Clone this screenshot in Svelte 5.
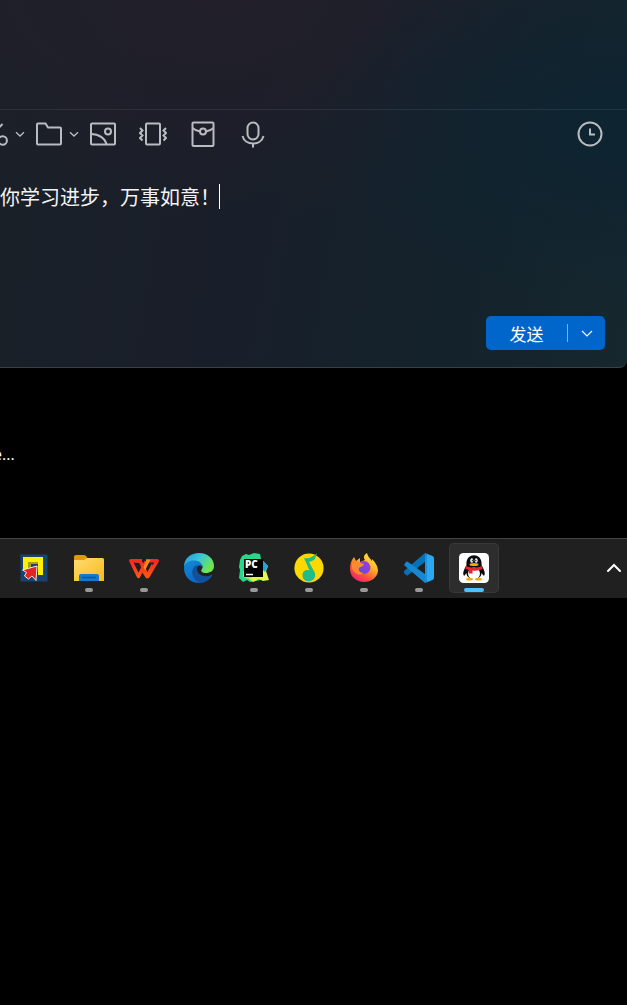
<script>
  let message = $state('你学习进步，万事如意！');
</script>

{#snippet chevron()}
  <svg class="chev" viewBox="0 0 12 12" aria-hidden="true"><path d="M2 4.200 6 8 10 4.200" /></svg>
{/snippet}

<div class="screen">
  <main class="chat">
    <section class="history" aria-label="聊天记录"></section>
    <section class="composer">
      <div class="toolbar">
        <div class="group">
          <button class="tool" aria-label="截图">
            <svg viewBox="0 0 28 28"><path d="M8 18 21.500 4M2 4l15 14" /><circle cx="4.500" cy="21" r="4.200" /><circle cx="21.700" cy="20.500" r="4.200" /></svg>
          </button>
          <button class="more" aria-label="截图选项">{@render chevron()}</button>
        </div>
        <div class="group">
          <button class="tool" aria-label="文件">
            <svg viewBox="0 0 28 28"><path d="M2 4.500Q2 3.500 3 3.500H10.500L13 7.500H25Q26 7.500 26 8.500V23.500Q26 24.500 25 24.500H3Q2 24.500 2 23.500Z" /></svg>
          </button>
          <button class="more" aria-label="文件选项">{@render chevron()}</button>
        </div>
        <div class="tools">
          <button class="tool" aria-label="图片">
            <svg viewBox="0 0 28 28"><rect x="2" y="3.500" width="24" height="21" rx="1" /><circle cx="19" cy="11.500" r="3" /><path d="M2 14C10 14 16 18 17.500 24.500" /></svg>
          </button>
          <button class="tool" aria-label="窗口抖动">
            <svg viewBox="0 0 28 28"><rect x="7" y="3.500" width="14" height="21" rx="1" /><path d="M1 8 3.500 10.500 1 13 3.500 15.500 1 18 3.500 20.500M27 8 24.500 10.500 27 13 24.500 15.500 27 18 24.500 20.500" /></svg>
          </button>
          <button class="tool" aria-label="红包">
            <svg viewBox="0 0 28 28"><rect x="3.500" y="2.500" width="21" height="23.500" rx="1" /><path d="M3.500 8Q7 11 11 11.500M24.500 8Q21 11 17 11.500" /><circle cx="14" cy="11.500" r="3" /></svg>
          </button>
          <button class="tool" aria-label="语音">
            <svg viewBox="0 0 28 28"><rect x="8.500" y="2.500" width="11" height="17" rx="5.500" /><path d="M3.500 16C6 26 22 26 24.500 16M14 23.500v4" /></svg>
          </button>
        </div>
        <button class="tool history-button" aria-label="消息记录">
          <svg viewBox="0 0 28 28"><circle cx="14" cy="14" r="11.500" /><path d="M14 8.500v6h5" /></svg>
        </button>
      </div>
      <div class="editor">
        <textarea aria-label="消息" rows="1" spellcheck="false" bind:value={message}></textarea>
        <span class="caret"></span>
      </div>
      <div class="actions">
        <div class="send">
          <button class="send-main">发送</button>
          <button class="send-more" aria-label="发送选项"><svg viewBox="0 0 14 14"><path d="M2 5 7 10 12 5" /></svg></button>
        </div>
      </div>
    </section>
  </main>

  <div class="desktop"><span class="label">e...</span></div>

  <nav class="taskbar" aria-label="任务栏">
    <div class="apps">
      <button class="app" aria-label="截图工具">
        <svg viewBox="0 0 30 30">
          <rect x="1.500" y="1.500" width="27" height="27" fill="#19436f" />
          <path d="M4 4h20v18h-5V9H9v9H4Z" fill="#fff000" /><path d="M9 9h10v2h-7v5H9Z" fill="#a5a11c" />
          <path d="m18 13-14.500 4 4 2.500-2 3.500 4 3 3.500-3 4 4.500Z" fill="#e32224" stroke="#f2e8e8" stroke-width="1" />
        </svg>
      </button>
      <button class="app" aria-label="文件资源管理器">
        <svg viewBox="0 0 30 30">
          <defs><linearGradient id="folder" x2="1" y2="1"><stop stop-color="#ffdc70" /><stop offset="1" stop-color="#f9b91e" /></linearGradient></defs>
          <path d="M0 4Q0 2 2 2h8q2 0 3.500 3H28q2 0 2 2v10H0Z" fill="#df9909" />
          <path d="M0 7h10l3-2h15q2 0 2 2v21H0Z" fill="url(#folder)" />
          <path d="M5 28v-5q0-2 2-2h16q2 0 2 2v5Z" fill="#1479d2" /><path d="M8 24.500h14" stroke="#07559c" stroke-width="1.500" />
        </svg>
        <span class="dot"></span>
      </button>
      <button class="app" aria-label="WPS Office">
        <svg viewBox="0 0 30 30">
          <defs><linearGradient id="wps" x2="0" y2="1"><stop stop-color="#fb2822" /><stop offset="1" stop-color="#ff5411" /></linearGradient></defs>
          <path d="M13 7.800H1.800L9.500 23.500 17 8.500M12.500 15l5.500 8.500L24 12" fill="none" stroke="url(#wps)" stroke-width="3.400" stroke-linejoin="round" />
          <path d="M6 8h5l8 15.500L28.200 7.800H17" fill="none" stroke="url(#wps)" stroke-width="3.400" stroke-linejoin="round" />
          <path d="m14.500 14 3-7.500h4l-5.500 11Z" fill="#ff8b20" />
        </svg>
        <span class="dot"></span>
      </button>
      <button class="app" aria-label="Microsoft Edge">
        <svg viewBox="0 0 30 30">
          <defs>
            <linearGradient id="edgeTop" x2="1" y2=".5"><stop stop-color="#2496dc" /><stop offset=".5" stop-color="#38c6da" /><stop offset="1" stop-color="#70e64e" /></linearGradient>
            <linearGradient id="edgeLow" x2=".5" y2="1"><stop stop-color="#1587d7" /><stop offset="1" stop-color="#0868c6" /></linearGradient>
          </defs>
          <path d="M0 14C0 5 7 0 15 0c9 0 15 6 15 13 0 5-4 7-8 7-4 0-6-2-4-4 2-3-1-7-6-7C6 9 2 10 0 14Z" fill="url(#edgeTop)" />
          <path d="M0 15C1 9 6 7 11 7.500c5 .5 8 3.500 7.500 7-1-2-3-2.500-5-1.500-3 2-3 7 1 10 4 3 9 3 13 0C25 27 20 30 15 30 7 30 0 24 0 15Z" fill="url(#edgeLow)" />
          <path d="M10 14c-4 5-1 13 6 16 5 0 9-3 12-7 .5-1 0-1.500-1-1-6 3-14 0-14-6 0-2 1-3 2-3-2-1-4-.5-5 1Z" fill="#12509a" />
        </svg>
      </button>
      <button class="app" aria-label="PyCharm">
        <svg viewBox="0 0 30 30">
          <path d="M1 7 3 3l4-2 3 1 5-2 6 1 1 5v21l-5 1-6 1-3-2-4 2-4-4 1-8-1-3Z" fill="#26d887" />
          <path d="m22 6 7 7-2 5 3 9-6 1-4-2-6 3-5-4Z" fill="#e4f648" /><path d="m24 8 5 5-3 6-3-3Z" fill="#19a8e4" />
          <path d="m4 19 5-3 4 9-4 1-5-2Z" fill="#9bec54" />
          <rect x="5" y="6" width="19" height="18" />
          <text x="6" y="15" font-family="Open Sans, sans-serif" font-size="10" font-weight="800" fill="#fff">PC</text>
          <path d="M7 21.500h7" stroke="#fff" stroke-width="1.500" />
        </svg>
        <span class="dot"></span>
      </button>
      <button class="app" aria-label="QQ音乐">
        <svg viewBox="0 0 30 30">
          <circle cx="15" cy="15" r="14.600" fill="#ffd800" />
          <path d="M10 5c5 1 9-1 13-5l-2 6c-2 2-4 2-6 3l6 11c2 10-12 11-12.500 3-.5-5 4-7 7-5.500Z" fill="#20bd87" />
        </svg>
        <span class="dot"></span>
      </button>
      <button class="app" aria-label="Firefox">
        <svg viewBox="0 0 30 30">
          <defs>
            <linearGradient id="fox" x1=".9" y1="0" x2=".25" y2="1"><stop stop-color="#fff34a" /><stop offset=".4" stop-color="#ffb52b" /><stop offset=".7" stop-color="#ff5b35" /><stop offset="1" stop-color="#ef1b77" /></linearGradient>
            <linearGradient id="globe" x1="1" x2="0" y2="1"><stop stop-color="#aa36de" /><stop offset="1" stop-color="#5553d6" /></linearGradient>
          </defs>
          <path d="M3 7 5 4l2 4 4-3v4l5-2c-2-3-1-5 2-7 1 4 3 5 5 8V6c4 4 6 8 6 12-1 7-7 11-14 11S1 24 1 16c0-4 1-7 2-9Z" fill="url(#fox)" />
          <circle cx="15" cy="14.500" r="6.500" fill="url(#globe)" />
          <path d="M3 10c4-2 7-1 9 0l3 1c-1 3-3 2-5 4-1 2 1 5 5 5-5 3-10 1-12-5Z" fill="#ff8a2d" />
        </svg>
        <span class="dot"></span>
      </button>
      <button class="app" aria-label="Visual Studio Code">
        <svg viewBox="0 0 30 30">
          <path d="M21 0v9L4 22q-1 1-2 0l-2-2q-1-1 0-2Z" fill="#0871b6" />
          <path d="m0 12 2-3q1-1 2 0l17 12v9L0 12Z" fill="#1688d2" />
          <path d="m21 0 7.500 3Q30 4 30 5v20q0 1-1.500 2L21 30q2-1 2-3V3q0-2-2-3Z" fill="#2aa9f2" /><path d="M21 0q2 1 2 3v24q0 2-2 3Z" fill="#1c91df" />
        </svg>
        <span class="dot"></span>
      </button>
      <button class="app active" aria-label="QQ">
        <svg viewBox="0 0 30 30">
          <rect width="30" height="30" rx="4.500" fill="#fff" />
          <path d="M7.500 12C6-1 24-1 22.500 12c2 4 4 7 3 10-1 2-2-1-3-2 0 8-15 8-15 0-1 1-2 4-3 2-1-3 1-6 3-10Z" fill="#090b0e" />
          <ellipse cx="15" cy="20.500" rx="6" ry="6" fill="#fff" />
          <ellipse cx="12.800" cy="7.500" rx="1.500" ry="2.200" fill="#fff" /><ellipse cx="17.200" cy="7.500" rx="1.500" ry="2.200" fill="#fff" />
          <path d="M13.300 6.700v1.600M16.800 6.700v1.600" stroke="#000" stroke-width="1" />
          <ellipse cx="15" cy="11.500" rx="4.500" ry="1.500" fill="#f5a900" />
          <path d="M7 13c5 2 11 2 16 0l.5 3c-3 1.500-7 2-10 1.500v3H9.800V17L6.500 16Z" fill="#ed2132" />
          <ellipse cx="10.500" cy="26.300" rx="3.500" ry="1.300" fill="#f5a900" /><ellipse cx="19.500" cy="26.300" rx="3.500" ry="1.300" fill="#f5a900" />
        </svg>
        <span class="dot"></span>
      </button>
    </div>
    <button class="tray" aria-label="显示隐藏的图标"><svg viewBox="0 0 16 16"><path d="M2 11 8 5l6 6" /></svg></button>
  </nav>
</div>

<style>
  :global(body) {
    margin: 0;
    background: #000;
  }
  .screen {
    min-height: 100vh;
    overflow: hidden;
    background: #000;
    color: #fff;
    font-family: "Noto Sans CJK SC", sans-serif;
  }
  button {
    display: flex;
    align-items: center;
    justify-content: center;
    padding: 0;
    border: 0;
    background: none;
    color: inherit;
    font: inherit;
  }
  .chat {
    border-bottom: 1px solid #3a4146;
    border-bottom-right-radius: 8px;
    background:
      radial-gradient(ellipse 48% 50% at 98% 34%, #0e2431 10%, #0e243100),
      radial-gradient(ellipse 75% 60% at 35% 0%, #221f2a 0%, #221f2a00),
      linear-gradient(100deg, #1a2028 0%, #191e29 35%, #14222b 70%, #16272e 100%);
  }
  .history {
    height: 109px;
  }
  .composer {
    border-top: 1px solid #ffffff14;
  }
  .toolbar {
    display: flex;
    align-items: center;
    gap: 9px;
    height: 48px;
    margin-left: -19px;
    padding-right: 23px;
  }
  .group {
    display: flex;
    flex: none;
    align-items: center;
    gap: 5px;
  }
  .tools {
    display: flex;
    gap: 22px;
  }
  .tool svg {
    display: block;
    width: 28px;
    height: 28px;
    fill: none;
    stroke: #b9bcc0;
    stroke-width: 2;
  }
  .history-button {
    margin-left: auto;
  }
  .chev {
    display: block;
    width: 12px;
    height: 12px;
    fill: none;
    stroke: #b9bcc0;
    stroke-width: 1.3;
  }
  .editor {
    position: relative;
    padding: 25px 0 105px;
  }
  textarea {
    display: block;
    box-sizing: border-box;
    width: 100%;
    height: 28px;
    padding: 0;
    border: 0;
    outline: 0;
    resize: none;
    overflow: hidden;
    background: none;
    color: #f2f3f4;
    font: 20px/28px "Noto Sans CJK SC", sans-serif;
  }
  .caret {
    position: absolute;
    top: 26px;
    left: 219px;
    width: 1px;
    height: 25px;
    background: #fff;
  }
  .actions {
    display: flex;
    justify-content: flex-end;
    padding: 0 22px 17px 0;
  }
  .send {
    display: flex;
    align-items: center;
    height: 34px;
    border-radius: 5px;
    background: #0066cc;
  }
  .send-main {
    width: 81px;
    height: 34px;
    font-size: 17px;
  }
  .send-more {
    width: 38px;
    height: 18px;
    border-left: 1px solid #7fb2e5;
  }
  .send-more svg {
    width: 14px;
    height: 14px;
    fill: none;
    stroke: #fff;
    stroke-width: 1.2;
  }
  .desktop {
    height: 94px;
    padding-top: 76px;
  }
  .label {
    display: block;
    margin-left: -7px;
    font: 16px/20px "Open Sans", sans-serif;
  }
  .taskbar {
    display: flex;
    align-items: flex-start;
    justify-content: space-between;
    box-sizing: border-box;
    height: 60px;
    padding-top: 4px;
    border-top: 1px solid #444;
    background: #202020;
  }
  .apps {
    display: flex;
    gap: 5px;
    padding-left: 9px;
  }
  .app {
    position: relative;
    box-sizing: border-box;
    width: 50px;
    height: 50px;
    border-radius: 5px;
  }
  .app svg {
    width: 30px;
    height: 30px;
  }
  .active {
    background: #2d2d2d;
    box-shadow: inset 0 0 0 1px #383838;
  }
  .dot {
    position: absolute;
    bottom: 1px;
    left: 50%;
    width: 8px;
    height: 4px;
    border-radius: 2px;
    background: #999;
    transform: translateX(-50%);
  }
  .active .dot {
    width: 20px;
    background: #4cc2ff;
  }
  .tray {
    height: 50px;
    margin-right: 5px;
  }
  .tray svg {
    width: 16px;
    height: 16px;
    fill: none;
    stroke: #fff;
    stroke-width: 2;
    stroke-linecap: round;
  }
</style>
